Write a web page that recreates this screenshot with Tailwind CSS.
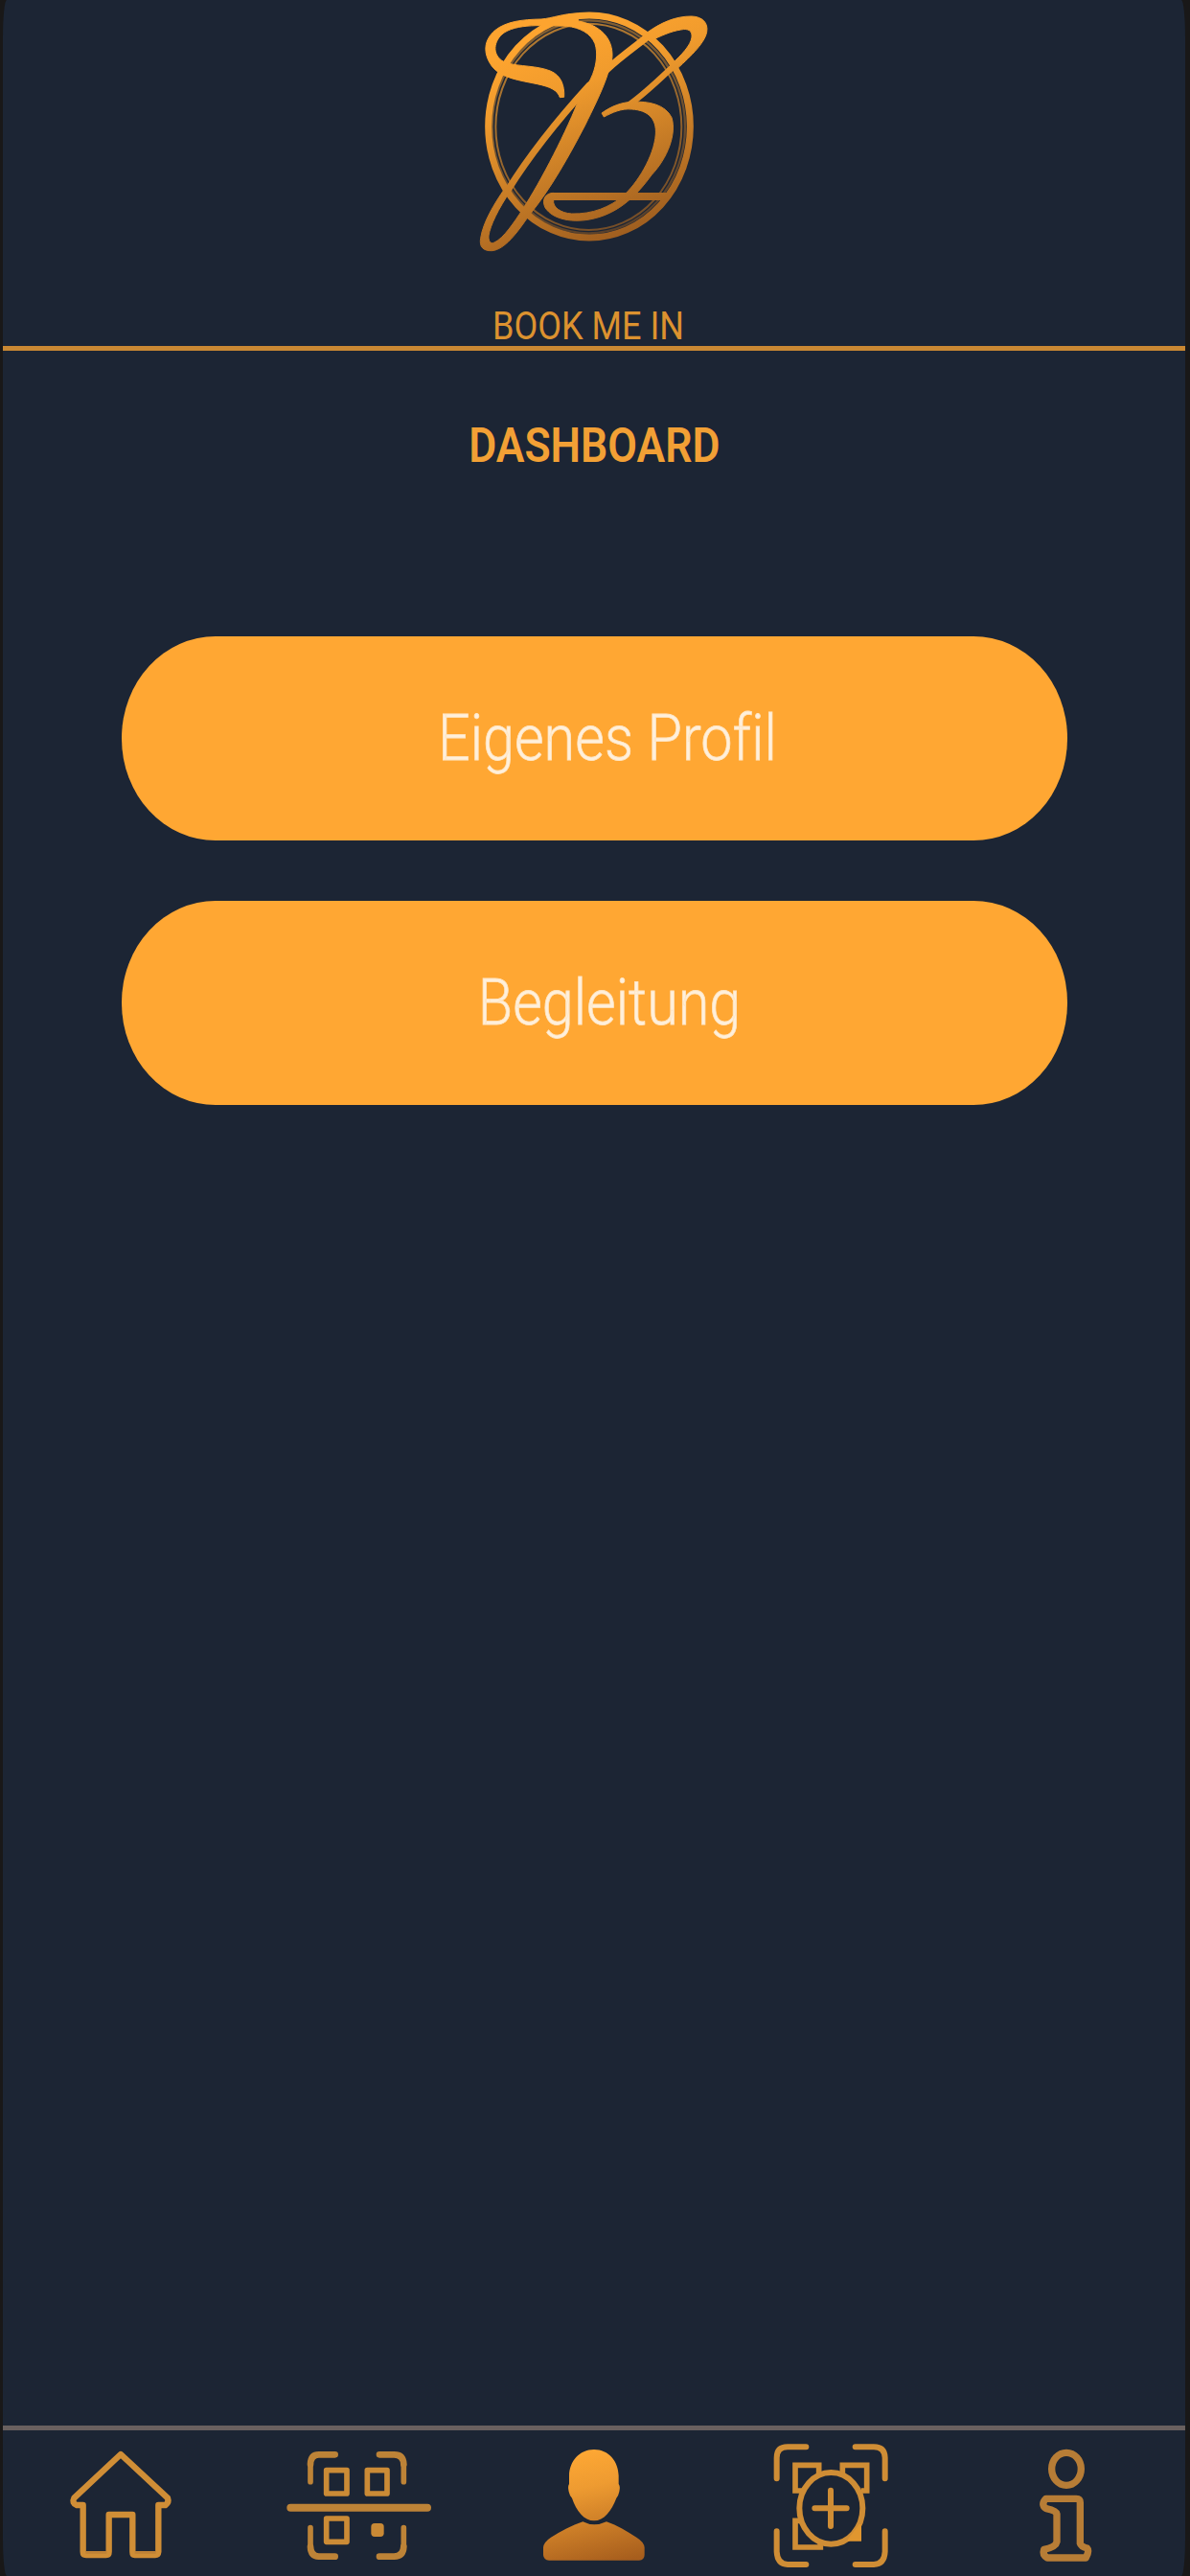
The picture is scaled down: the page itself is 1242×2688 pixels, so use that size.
<!DOCTYPE html>
<html lang="de">
<head>
<meta charset="utf-8">
<title>Book Me In</title>
<script src="https://cdn.jsdelivr.net/npm/@tailwindcss/browser@4"></script>
</head>
<body class="bg-[#191818]">
<div class="h-[2688px] w-[1242px] overflow-hidden pl-[3px] pr-[5px] font-[Roboto,sans-serif]">
<div class="flex h-full flex-col overflow-hidden rounded-[4px/40px] bg-[#1c2534]">
  <header class="flex h-[366px] shrink-0 flex-col items-center border-b-[5px] border-[#c98833]">
    <svg class="h-[280px] w-[280px] shrink-0" viewBox="0 0 840 840" fill="none">
      <defs>
        <linearGradient id="gold" gradientUnits="userSpaceOnUse" x1="250" y1="130" x2="500" y2="760">
          <stop offset="0" stop-color="#fda42f"/><stop offset=".25" stop-color="#f09b2d"/><stop offset="1" stop-color="#9c5c1f"/>
        </linearGradient>
      </defs>
      <g stroke="url(#gold)" stroke-linecap="round" stroke-linejoin="round">
        <ellipse cx="405" cy="396" rx="316" ry="348" stroke-width="21"/>
        <ellipse cx="403" cy="397" rx="302" ry="333" stroke-width="7" opacity=".45"/>
        <ellipse cx="403" cy="397" rx="291" ry="323" stroke-width="6" opacity=".65"/>
        <path stroke-width="21" d="M404 268C320 360 225 475 150 595"/>
        <path stroke-width="22" d="M460 218C500 180 550 145 590 113"/>
        <path stroke-width="19" d="M668 208C625 248 585 288 534 325"/>
        <path stroke-width="24" stroke-linecap="butt" d="M285 615H650"/>
      </g>
      <g fill="url(#gold)" stroke="url(#gold)" stroke-width="3" fill-rule="evenodd">
        <path d="M326 304L313 305C306 283 285 272 242 263C190 252 128 245 100 207C70 165 76 124 110 95C145 67 195 61 255 60C290 57 325 42 370 42L370 66C430 76 470 110 476 158C481 190 467 218 460 240C445 285 415 345 392 392C345 482 285 592 216 675C180 728 140 782 100 785C72 786 60 772 65 745C73 695 106 640 142 588L159 596C120 655 95 705 90 738C89 757 97 764 108 759C138 745 170 695 196 656C255 565 335 410 378 298C392 274 408 255 416 232C428 200 432 165 423 137C410 104 375 86 335 82C265 80 175 72 132 107C103 134 100 178 145 197C190 209 240 205 283 222C317 236 328 268 326 304Z"/>
        <path d="M583 104C630 70 675 51 725 51C760 52 778 72 773 100C766 138 713 185 675 220L660 203C695 171 722 143 726 117C728 96 715 88 692 93C660 98 630 112 596 128Z"/>
        <path d="M451 366L444 354C475 332 507 320 540 319C592 316 644 328 663 368C679 420 650 495 600 548C555 610 500 665 420 684C355 700 290 687 267 650C255 625 268 604 293 604L293 627C290 648 315 667 350 669C415 671 470 648 510 614C554 576 608 490 613 420C616 372 590 345 538 342C505 339 478 352 451 366Z"/>
      </g>
    </svg>
    <div class="mt-[37px] h-[44px] origin-center translate-x-[-6px] scale-x-[.9] whitespace-nowrap text-[40px] leading-[48px] text-[#dc922f]">BOOK ME IN</div>
  </header>
  <main class="flex grow flex-col items-center">
    <h1 class="mt-[69px] h-[60px] scale-x-[.89] whitespace-nowrap text-[50px] font-semibold leading-[60px] text-[#f2a035]">DASHBOARD</h1>
    <div class="mt-[169px] flex w-[987px] flex-col gap-[63px]">
      <button class="flex h-[213px] items-center justify-center rounded-[98px/106px] bg-[#ffa733] text-[67px] font-light text-[#fff0dc]"><span class="block translate-x-[14px] scale-x-[.885] whitespace-nowrap [font-variant-ligatures:none] [-webkit-text-stroke:0.8px_#ffe6c4]">Eigenes Profil</span></button>
      <button class="flex h-[213px] items-center justify-center rounded-[98px/106px] bg-[#ffa733] text-[67px] font-light text-[#fff0dc]"><span class="block translate-x-[16px] scale-x-[.885] whitespace-nowrap [font-variant-ligatures:none] [-webkit-text-stroke:0.8px_#ffe6c4]">Begleitung</span></button>
    </div>
  </main>
  <nav class="grid h-[157px] shrink-0 grid-cols-5 justify-items-center border-t-[5px] border-[#69605f]">
    <svg class="h-[152px] w-[160px]" viewBox="138 108 480 456" fill="none" stroke="#d08e36" stroke-linejoin="round" stroke-width="19">
      <path d="M378 183L525 320Q530 334 518 342H496V488Q495 498 486 498H422Q415 498 415 488V372H341V488Q341 498 332 498H270Q260 498 260 488V342H240Q224 336 232 320Z"/>
      <path stroke="#bf8236" stroke-width="8" d="M268 490H334M422 490H488"/>
    </svg>
    <svg class="h-[152px] w-[160px]" viewBox="877 108 480 456" fill="none" stroke="#bd8337" stroke-linecap="round" stroke-linejoin="round">
      <g stroke-width="17">
        <path stroke-width="20" d="M1047 184H996Q971 184 970 214M1186 184H1232Q1261 184 1262 214M1047 503H996Q971 502 970 472M1186 503H1232Q1261 502 1262 472"/>
        <path d="M970 214V269M1262 214V269M970 472V413M1262 472V413"/>
        <path stroke="#cb8b36" d="M1020 233H1084V306H1020ZM1148 233H1210V306H1148ZM1020 384H1084V457H1020Z"/>
      </g>
      <path stroke-width="24" d="M908 350H1336"/>
      <path stroke="#c98935" stroke-width="22" d="M1171 410H1189V430H1171Z"/>
    </svg>
    <svg class="h-[152px] w-[160px]" viewBox="27 108 480 456">
      <defs><linearGradient id="person" gradientUnits="userSpaceOnUse" x1="220" y1="180" x2="300" y2="530"><stop offset="0" stop-color="#fda734"/><stop offset=".3" stop-color="#ee9b31"/><stop offset="1" stop-color="#a75e1d"/></linearGradient></defs>
      <path fill="url(#person)" d="M267 168C313 168 343 205 344 250V276Q350 284 346 300Q343 314 337 320C322 360 298 391 267 391C236 391 211 360 198 320Q191 314 188 300Q184 284 189 276V250C190 205 221 168 267 168ZM232 394Q267 412 306 394C340 406 370 424 400 443Q424 458 425 475V498Q425 514 408 515H126Q109 514 108 498V475Q109 458 132 443C162 424 198 406 232 394Z"/>
    </svg>
    <svg class="h-[152px] w-[160px]" viewBox="767 108 480 456" fill="none" stroke="#cf8d35" stroke-linecap="round" stroke-width="18">
      <path d="M930 160H872Q838 160 838 194V259M1084 160H1142Q1176 160 1177 194V259M838 424V488Q840 527 872 528H930M1177 424V488Q1175 527 1142 528H1084"/>
      <path stroke-linecap="butt" stroke-width="17" d="M970 243V217H896V297H918M1044 243V217H1120V297H1102M910 391H896V474H975V456"/>
      <ellipse cx="1008" cy="352" rx="99" ry="112"/>
      <path d="M1007 296V408M957 352H1057"/>
      <path fill="#e0962f" stroke="none" d="M1060 450L1096 402H1103V455H1060Z"/>
    </svg>
    <svg class="h-[152px] w-[160px]" viewBox="35 108 480 456" fill="none" stroke="#b77d36" stroke-linejoin="round" stroke-width="22">
      <ellipse cx="272" cy="229" rx="46" ry="51"/>
      <path d="M208 322H303Q315 322 315 334V462Q318 472 337 477Q345 485 333 507H212Q196 498 202 481Q239 473 242 457V370Q240 359 209 353Q190 341 208 322Z"/>
    </svg>
  </nav>
</div>
</div>
</body>
</html>
